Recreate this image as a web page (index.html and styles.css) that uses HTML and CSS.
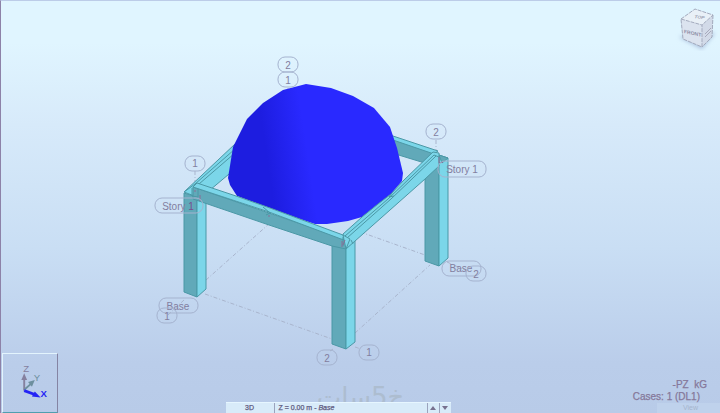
FILE: index.html
```html
<!DOCTYPE html>
<html lang="en">
<head>
<meta charset="utf-8">
<title>3D structural view</title>
<link rel="stylesheet" href="styles.css">
</head>
<body>
<main class="viewport">
  <svg class="scene" viewBox="0 0 720 413" role="img" aria-label="Frame with dome">
    <defs>
      <linearGradient id="dome" gradientUnits="userSpaceOnUse" x1="252" y1="150" x2="306" y2="142">
        <stop offset="0.25" stop-color="#1d1de0"/>
        <stop offset="1" stop-color="#2929ff"/>
      </linearGradient>
    </defs>
    <g class="grid-lines">
      <path d="M168 315L184 300M206 280L270 223M205 294L332 339M355 333L430 265M352 229L425 255M355 347L361 349M447 262L467 271M195 171V184M436 140V152M333 349L330 351M288 88V94"/>
    </g>
    <g class="steel">
      <path class="light" d="M184 192L235 144V169L210 190L195 185Z"/>
      <path class="edge" d="M195 184L235 149M199 184L235 153"/>
      <path class="dark" d="M390 138L434 153L428 164L392 153Z"/>
      <path class="light" d="M390 135L438 151L434 154L390 139Z"/>
      <path class="dark" d="M425 163L439 157V266L425 261Z"/>
      <path class="light" d="M439 155L448 158V258L439 266Z"/>
      <path class="dark" d="M439 155L448 158L442 163Z"/>
      <path class="dark" d="M184 193L197 197V297L184 292Z"/>
      <path class="light" d="M197 197L206 194V289L197 297Z"/>
      <path class="light" d="M184 192L195 184L199 188L197 197Z"/>
      <path class="dark" d="M332 244L346 248V349L332 344Z"/>
      <path class="light" d="M346 248L355 240V342L346 349Z"/>
    </g>
    <path fill="url(#dome)" d="M228 178L233 147L247 119L263 103L283 90L306 84L331 88L353 96L374 108L390 127L397 148L403 173L402 181L391 194L375 207L362 217L348 221L327 224L315 224L300 219L237 196L230 185Z"/>
    <g class="steel">
      <path class="light" d="M343 234L362 217L378 204L391 194L403 181L433 152L439 153V166L425 179L346 249Z"/>
      <path class="edge" d="M345 236L388 199L434 155L439 157M347 238L391 199L436 156"/>
      <path class="dark" d="M193 187L342 238L346 240V249L332 246L269 225L193 199Z"/>
      <path class="light" d="M193 187L197 183L236 196L270 208L343 235L346 240L341 239L269 212Z"/>
      <path class="light" d="M343 235L350 239L346 249Z"/>
      <path class="edge" d="M192 188V196L198 197V189M343 237V246M351 240L353 244M263 207L270 213L266 215M392 193L389 197L394 196"/>
      <path class="node" d="M195 190V192M200 195V201M269 215V217M342 241V247M345 240L343 245M439 157V163L443 162"/>
    </g>
    <g class="tags">
      <rect x="278" y="57" width="20" height="15" rx="7"/><text x="288" y="69">2</text>
      <rect x="278" y="72" width="20" height="15" rx="7"/><text x="288" y="84">1</text>
      <rect x="185" y="156" width="20" height="15" rx="7"/><text x="195" y="167">1</text>
      <rect x="426" y="124" width="20" height="15" rx="7"/><text x="436" y="136">2</text>
      <rect x="155" y="198" width="48" height="15" rx="7"/><text x="178" y="210">Story <tspan class="hot">1</tspan></text>
      <rect x="438" y="161" width="48" height="16" rx="7"/><text x="462" y="173">Story 1</text>
      <rect x="159" y="298" width="39" height="15" rx="7"/><text x="178" y="310">Base</text>
      <rect x="157" y="308" width="20" height="15" rx="7"/><text x="167" y="320">1</text>
      <rect x="442" y="261" width="39" height="15" rx="7"/><text x="461" y="272">Base</text>
      <rect x="466" y="266" width="20" height="15" rx="7"/><text x="476" y="278">2</text>
      <rect x="317" y="350" width="20" height="15" rx="7"/><text x="327" y="362">2</text>
      <rect x="359" y="345" width="20" height="15" rx="7"/><text x="369" y="356">1</text>
    </g>
  </svg>

  <div class="watermark" lang="ar" dir="rtl">خ5سات</div>

  <button class="view-cube" type="button" aria-label="View cube">
    <svg viewBox="0 0 50 50">
      <defs>
        <filter id="soft" x="-30%" y="-60%" width="160%" height="220%"><feGaussianBlur stdDeviation="2"/></filter>
      </defs>
      <path d="M9 36L30 31L45 32L32 48Z" fill="#a9bedc" filter="url(#soft)"/>
      <path class="cube-front" d="M11 18L32 24V46L13 38Z"/>
      <path class="cube-side" d="M32 24L43 14L42 36L32 46Z"/>
      <path class="cube-top" d="M11 18L25 8L43 14L32 24Z"/>
      <path class="cube-line" d="M11 18L32 24V46L13 38ZM11 18L25 8L43 14L32 24M43 14L42 36L32 46"/>
      <text class="cube-text" transform="matrix(1 .22 0 1 14 32)">FRONT</text>
      <text class="cube-text small" transform="matrix(1 .12 -.3 .8 24 17)">TOP</text>
      <path d="M35 33L41 27M35 36L41 30" stroke="#a8aabc" fill="none"/>
    </svg>
  </button>

  <footer class="hud">
    <div class="axes">
      <svg viewBox="0 0 56 60" role="img" aria-label="Axes X Y Z">
        <path d="M22 38V25" stroke="#85809e" stroke-width="2"/>
        <path d="M22 20L25 27H19Z" fill="#85809e"/>
        <path d="M22 37L29 31" stroke="#6d8f9e" stroke-width="2"/>
        <path d="M33 27L30 34L26 29Z" fill="#6d8f9e"/>
        <path d="M22 38L33 42" stroke="#2424f5" stroke-width="3"/>
        <path d="M39 45L30 44L33 39Z" fill="#2424f5"/>
        <text x="21" y="19" fill="#85809e">Z</text>
        <text x="32" y="28" fill="#6d8f9e">Y</text>
        <text class="x-name" x="39" y="45" fill="#2424f5">X</text>
      </svg>
    </div>
    <div class="level-bar">
      <button class="mode" type="button">3D</button>
      <button class="level" type="button">Z = 0.00 m - <i>Base</i></button>
      <button class="step" type="button" aria-label="Level up"><svg viewBox="0 0 6 4"><path d="M3 0L6 4H0Z"/></svg></button>
      <button class="step" type="button" aria-label="Level down"><svg viewBox="0 0 6 4"><path d="M0 0H6L3 4Z"/></svg></button>
    </div>
    <div class="case-info">
      <p class="load">-PZ&nbsp; kG</p>
      <p class="cases">Cases: 1 (DL1)</p>
      <p class="view-name">View</p>
    </div>
  </footer>
</main>
</body>
</html>
```

FILE: styles.css
```css
* { box-sizing: border-box; }

body {
  margin: 0;
  font-family: "Liberation Sans", Arial, sans-serif;
}

.viewport {
  position: relative;
  display: flex;
  flex-direction: column;
  justify-content: flex-end;
  min-height: 100vh;
  overflow: hidden;
  border-top: 1px solid #bccce8;
  border-left: 1px solid #8d82a8;
  background: linear-gradient(#e0f5ff 0%, #e0f5ff 10%, #d7eafa 30%, #c9def4 60%, #bacdea 88%, #b8cbe8 100%);
}

/* 3D scene fills the viewport behind the overlays */
.scene {
  position: absolute;
  top: -1px;
  left: -1px;
  width: 100vw;
  height: 100vh;
}

.grid-lines path {
  fill: none;
  stroke: #a9b5cd;
  stroke-dasharray: 4 2 1 2;
}

.steel path {
  stroke: #4b98a6;
  stroke-linejoin: round;
}

.steel .light { fill: #7bd6e9; }
.steel .dark { fill: #61a9b9; }
.steel .edge { fill: none; }
.steel .node { fill: none; stroke: #896f96; }

.tags rect {
  fill: none;
  stroke: #a5b3cf;
}

.tags text {
  fill: #827e9f;
  font-size: 10px;
  text-anchor: middle;
}

.tags .hot { fill: #76508e; }

.watermark {
  position: absolute;
  right: 0;
  bottom: 0;
  left: 0;
  color: #adbdd0;
  font-family: "DejaVu Sans", sans-serif;
  font-size: 26px;
  line-height: 32px;
  text-align: center;
}

.view-cube {
  position: absolute;
  top: 0;
  right: 0;
  width: 50px;
  height: 50px;
  padding: 0;
  border: 0;
  background: none;
}

.view-cube svg {
  display: block;
  width: 100%;
}

.cube-front { fill: #dbe3ef; }
.cube-side { fill: #d2dae8; }
.cube-top { fill: #e9f0f7; }

.cube-line {
  fill: none;
  stroke: #a3aabd;
  stroke-dasharray: 4 1;
}

.cube-text {
  fill: #8d8da5;
  font-size: 5px;
  font-weight: bold;
}

.cube-text.small { fill: #a0a3b5; }

.hud {
  position: relative;
  display: grid;
  grid-template-columns: 5fr 225px 6fr;
  align-items: end;
}

.axes {
  width: 56px;
  margin-left: 1px;
  border: 1px solid #e3f4fd;
  border-right-color: #8584a3;
  border-bottom-color: #4f9faf;
}

.axes svg {
  display: block;
  width: 100%;
}

.axes text {
  font-size: 10px;
  stroke: currentColor;
  stroke-width: 0;
}

.axes .x-name { font-weight: bold; }

.level-bar {
  display: flex;
  height: 11px;
  border-top: 1px solid #e6f6ff;
  background: #d8ebf9;
}

.level-bar button {
  padding: 0;
  border: 0;
  border-left: 1px solid #9ba3bd;
  background: none;
  color: #5e5a80;
  font-family: inherit;
  font-size: 7px;
  -webkit-text-stroke: 0.25px #5e5a80;
  line-height: 10px;
}

.level-bar .mode {
  width: 48px;
  border-left: 0;
}

.level-bar .level {
  flex: 1;
  padding-left: 4px;
  text-align: left;
}

.level-bar .step { width: 12px; }

.step svg {
  display: block;
  width: 6px;
  margin: 0 auto;
  fill: #77718f;
}

.case-info {
  color: #85789a;
  font-size: 10px;
  -webkit-text-stroke: 0.25px #85789a;
  line-height: 12px;
  text-align: right;
}

.case-info p { margin: 0; }
.case-info .load { padding-right: 13px; }
.case-info .cases { padding-right: 20px; }

.case-info .view-name {
  width: 63px;
  margin-left: auto;
  padding-right: 22px;
  background: #bfd2ec;
  color: #a6b5cd;
  font-size: 7px;
  -webkit-text-stroke: 0;
  line-height: 10px;
}
```
